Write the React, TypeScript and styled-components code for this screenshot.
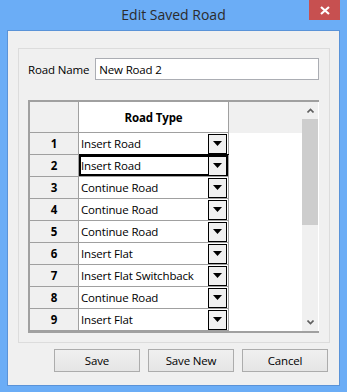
import styled, { createGlobalStyle } from "styled-components";

const GlobalStyle = createGlobalStyle`
    html, body {
        margin: 0;
        padding: 0;
        background: #ffffff;
    }
    body {
        font-family: "Open Sans", "Noto Sans", sans-serif;
        font-size: 11.5px;
        letter-spacing: -0.15px;
        color: #000;
    }
`;

const roadTypes = [
    "Insert Road",
    "Insert Road",
    "Continue Road",
    "Continue Road",
    "Continue Road",
    "Insert Flat",
    "Insert Flat Switchback",
    "Continue Road",
    "Insert Flat",
];

const SELECTED_ROW = 1;

const DropArrow = () => (
    <svg width="9" height="5" viewBox="0 0 9 5">
        <polygon points="0,0 9,0 4.5,5" fill="#000" />
    </svg>
);

const CloseIcon = () => (
    <svg width="10" height="9" viewBox="0 0 10 9">
        <path d="M1 1 L9 8 M9 1 L1 8" stroke="#fff" strokeWidth="2.2" />
    </svg>
);

const ChevronUp = () => (
    <svg width="7" height="5" viewBox="0 0 7 5">
        <path d="M0.5 4.5 L3.5 1.5 L6.5 4.5" stroke="#606060" strokeWidth="1.6" fill="none" />
    </svg>
);

const ChevronDown = () => (
    <svg width="7" height="5" viewBox="0 0 7 5">
        <path d="M0.5 0.5 L3.5 3.5 L6.5 0.5" stroke="#606060" strokeWidth="1.6" fill="none" />
    </svg>
);

export default function App() {
    return (
        <>
            <GlobalStyle />
            <Frame>
                <TitleBar>
                    <span />
                    <Title>Edit Saved Road</Title>
                    <CloseButton>
                        <CloseIcon />
                    </CloseButton>
                </TitleBar>
                <Client>
                    <GroupBox>
                        <NameRow>
                            <Label htmlFor="roadName">Road Name</Label>
                            <TextInput id="roadName" defaultValue="New Road 2" />
                        </NameRow>
                        <Grid>
                            <GridBody>
                                <HeaderRow>
                                    <CornerCell />
                                    <ColumnHeader>Road Type</ColumnHeader>
                                    <HeaderFiller />
                                </HeaderRow>
                                {roadTypes.map((type, i) => (
                                    <Row key={i}>
                                        <RowHeader>{i + 1}</RowHeader>
                                        <Cell $selected={i === SELECTED_ROW}>
                                            <CellText>{type}</CellText>
                                            <DropButton>
                                                <DropArrow />
                                            </DropButton>
                                        </Cell>
                                    </Row>
                                ))}
                                {/* next row, cut off by the grid's bottom edge */}
                                <Row>
                                    <RowHeader />
                                    <Cell $selected={false}>
                                        <CellText />
                                        <DropButton />
                                    </Cell>
                                </Row>
                            </GridBody>
                            <ScrollBar>
                                <ScrollArrow>
                                    <ChevronUp />
                                </ScrollArrow>
                                <ScrollTrack>
                                    <Thumb />
                                </ScrollTrack>
                                <ScrollArrow>
                                    <ChevronDown />
                                </ScrollArrow>
                            </ScrollBar>
                        </Grid>
                    </GroupBox>
                    <ButtonRow>
                        <DialogButton>Save</DialogButton>
                        <DialogButton>Save New</DialogButton>
                        <DialogButton>Cancel</DialogButton>
                    </ButtonRow>
                </Client>
            </Frame>
        </>
    );
}

const Frame = styled.div`
    width: 347px;
    height: 392px;
    box-sizing: border-box;
    background-color: #6badf6;
    padding: 0 7px 6px 7px;
    display: flex;
    flex-direction: column;
`;

const TitleBar = styled.div`
    height: 30px;
    display: grid;
    grid-template-columns: 1fr auto 1fr;
    align-items: start;
`;

const Title = styled.div`
    font-size: 14px;
    letter-spacing: 0;
    color: #2b2b2b;
    line-height: 30px;
`;

const CloseButton = styled.div`
    justify-self: end;
    width: 31px;
    height: 20px;
    background-color: #c75050;
    display: flex;
    align-items: center;
    justify-content: center;
`;

const Client = styled.div`
    flex: 1;
    background-color: #f0f0f0;
    border: 1px solid #5a93d8;
    display: flex;
    flex-direction: column;
    padding: 17px 9px 12px 10px;
`;

const GroupBox = styled.div`
    height: 295px;
    box-sizing: border-box;
    border: 1px solid #dcdcdc;
    padding: 9px 10px 9px 9px;
    display: flex;
    flex-direction: column;
    gap: 20px;
`;

const NameRow = styled.div`
    display: flex;
    align-items: center;
    gap: 6px;
`;

const Label = styled.label`
    white-space: nowrap;
`;

const TextInput = styled.input`
    flex: 1;
    height: 22px;
    box-sizing: border-box;
    border: 1px solid #abadb3;
    padding: 0 3px;
    font-family: inherit;
    font-size: 11.5px;
    letter-spacing: -0.15px;
    color: #000;
    background: #fff;
    outline: none;
`;

const Grid = styled.div`
    height: 233px;
    box-sizing: border-box;
    border: 2px solid #a0a0a0;
    border-right: none;
    display: flex;
    overflow: hidden;
    background: #fff;
`;

const GridBody = styled.div`
    flex: 1;
    display: flex;
    flex-direction: column;
    overflow: hidden;
`;

const HeaderRow = styled.div`
    display: flex;
    height: 31px;
    flex-shrink: 0;
    background: #f0f0f0;
`;

const CornerCell = styled.div`
    width: 49px;
    box-sizing: border-box;
    border-right: 1px solid #a0a0a0;
    border-bottom: 1px solid #a0a0a0;
`;

const ColumnHeader = styled.div`
    width: 150px;
    box-sizing: border-box;
    border-right: 1px solid #a0a0a0;
    border-bottom: 1px solid #a0a0a0;
    background: #fff;
    font-weight: 700;
    display: flex;
    align-items: center;
    justify-content: center;
`;

const HeaderFiller = styled.div`
    flex: 1;
`;

const Row = styled.div`
    display: flex;
    height: 22px;
    flex-shrink: 0;
`;

const RowHeader = styled.div`
    width: 49px;
    box-sizing: border-box;
    background: #f0f0f0;
    border-right: 1px solid #a0a0a0;
    border-bottom: 1px solid #a0a0a0;
    font-weight: 700;
    display: flex;
    align-items: center;
    justify-content: center;
`;

const Cell = styled.div<{ $selected: boolean }>`
    width: 150px;
    box-sizing: border-box;
    border-right: 1px solid #a0a0a0;
    border-bottom: 1px solid #a0a0a0;
    display: flex;
    align-items: center;
    padding: 1px 1px 1px 2px;
    box-shadow: ${(p) => (p.$selected ? "0 -1px 0 0 #000, inset 0 0 0 2px #000" : "none")};
`;

const CellText = styled.span`
    flex: 1;
    white-space: nowrap;
    overflow: hidden;
`;

const DropButton = styled.div`
    width: 19px;
    height: 20px;
    box-sizing: border-box;
    border: 1px solid #000;
    background: #f0f0f0;
    display: flex;
    align-items: center;
    justify-content: center;
    flex-shrink: 0;
`;

const ScrollBar = styled.div`
    width: 16px;
    border-right: 1px solid #fff;
    background: #f0f0f0;
    display: flex;
    flex-direction: column;
`;

const ScrollArrow = styled.div`
    height: 17px;
    display: flex;
    align-items: center;
    justify-content: center;
`;

const ScrollTrack = styled.div`
    flex: 1;
`;

const Thumb = styled.div`
    height: 106px;
    background: #cdcdcd;
`;

const ButtonRow = styled.div`
    display: flex;
    justify-content: flex-end;
    gap: 8px;
    margin-top: 6px;
    padding-right: 2px;
`;

const DialogButton = styled.button`
    width: 86px;
    height: 23px;
    box-sizing: border-box;
    border: 1px solid #acacac;
    background: linear-gradient(#f0f0f0, #e5e5e5);
    font-family: inherit;
    font-size: 11.5px;
    letter-spacing: -0.15px;
    color: #000;
    padding: 0;
`;
